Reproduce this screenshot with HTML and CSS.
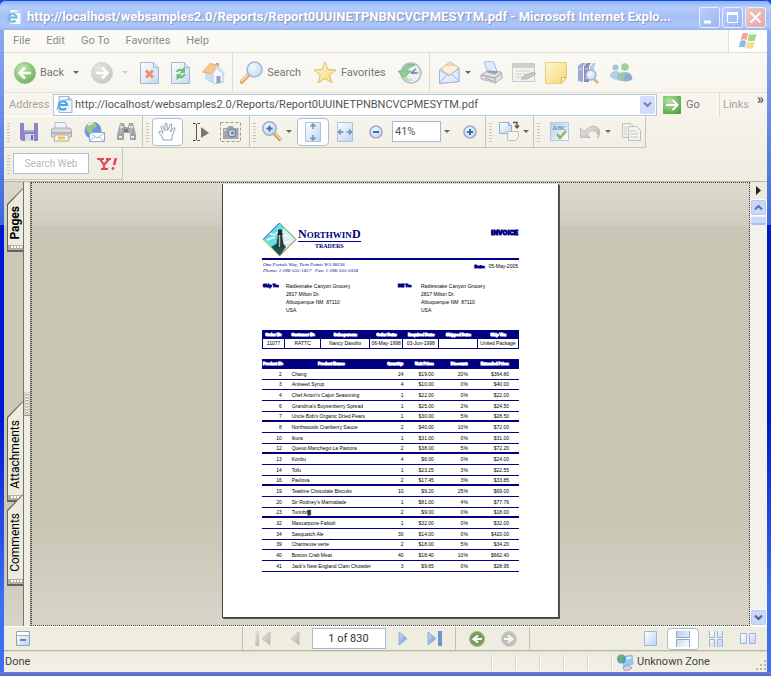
FILE: index.html
```html
<!DOCTYPE html>
<html lang="en">
<head>
<meta charset="utf-8">
<title>Report0UUINETPNBNCVCPMESYTM.pdf - Microsoft Internet Explorer</title>
<link rel="stylesheet" href="styles.css">
</head>
<body>
<svg class="defs" width="0" height="0" aria-hidden="true">
  <defs>
    <radialGradient id="green" cx=".35" cy=".3" r=".8"><stop offset="0" stop-color="#b9e3a4"/><stop offset=".6" stop-color="#77bf66"/><stop offset="1" stop-color="#55a04a"/></radialGradient>
    <radialGradient id="grey" cx=".35" cy=".3" r=".8"><stop offset="0" stop-color="#e4e4e0"/><stop offset="1" stop-color="#bdbdb8"/></radialGradient>
    <linearGradient id="paper" x1="0" y1="0" x2="1" y2="1"><stop offset="0" stop-color="#ffffff"/><stop offset="1" stop-color="#bfd4f1"/></linearGradient>
    <linearGradient id="paperdown" x1="1" y1="1" x2="0" y2="0"><stop offset="0" stop-color="#ffffff"/><stop offset="1" stop-color="#b3cbe8"/></linearGradient>
    <radialGradient id="lens" cx=".4" cy=".35" r=".7"><stop offset="0" stop-color="#f4fbff"/><stop offset="1" stop-color="#b4d6f2"/></radialGradient>
    <linearGradient id="gold" x1="0" y1="0" x2="1" y2="1"><stop offset="0" stop-color="#fffbd0"/><stop offset="1" stop-color="#f5cf60"/></linearGradient>
    <linearGradient id="blue" x1="0" y1="0" x2="1" y2="1"><stop offset="0" stop-color="#cfe4fa"/><stop offset="1" stop-color="#5f8fd0"/></linearGradient>
    <linearGradient id="silver" x1="0" y1="0" x2="1" y2="1"><stop offset="0" stop-color="#ececea"/><stop offset="1" stop-color="#b2b2b2"/></linearGradient>
  </defs>
</svg>

<div class="window">
  <header class="titlebar">
    <svg width="16" height="16" viewBox="0 0 16 16"><path d="M4 .5h8l3 3v12H4z" fill="#f4f8ff" stroke="#b4c8e4"/><path d="M12 .5v3h3" fill="#d4e2f6" stroke="#b4c8e4"/><path d="M2.500 8.500h8a4 4 0 1 0-1 3" fill="none" stroke="#6fb6dc" stroke-width="2"/><path d="M1 12C2 7 7 3 12 3" fill="none" stroke="#8cc8e4"/></svg>
    <h1>http://localhost/websamples2.0/Reports/Report0UUINETPNBNCVCPMESYTM.pdf - Microsoft Internet Explo...</h1>
    <div class="controls">
      <button class="wbtn" aria-label="Minimize"><svg width="19" height="19" viewBox="0 0 19 19"><path d="M4 14h7" stroke="#fff" stroke-width="3"/></svg></button>
      <button class="wbtn" aria-label="Maximize"><svg width="19" height="19" viewBox="0 0 19 19"><path d="M4.500 5v9.500h10V5M4 5h11" fill="none" stroke="#fff" stroke-width="1"/><path d="M4 5.500h11" stroke="#fff" stroke-width="3"/></svg></button>
      <button class="wbtn close" aria-label="Close"><svg width="19" height="19" viewBox="0 0 19 19"><path d="M4.500 4.500l10 10m0-10l-10 10" stroke="#fff" stroke-width="2"/></svg></button>
    </div>
  </header>

  <div class="chrome">
    <nav class="menubar">
      <button>File</button><button>Edit</button><button>Go To</button><button>Favorites</button><button>Help</button>
      <span class="flag"><svg width="20" height="18" viewBox="0 0 20 18"><path d="M4.500 1.500Q7 0 10 1.500L8.500 8Q6 6.500 2.500 8z" fill="#f2a48c"/><path d="M11 2Q14 3.500 18.500 2L17 8.500Q13 10 9.500 8.500z" fill="#a8d490"/><path d="M2.300 9Q5 7.500 8.200 9L6.800 15.500Q3.500 14 .8 15.500z" fill="#92b6ee"/><path d="M9.200 9.500Q12 11 16.700 9.500L15.200 16Q11.500 17.500 7.800 16z" fill="#fbe08c"/></svg></span>
    </nav>

    <div class="toolbar">
      <div class="group">
        <button><svg width="22" height="22" viewBox="0 0 22 22"><circle cx="11" cy="11" r="10.500" fill="url(#green)" stroke="#7dba70"/><path d="M17 11H6m5-5.500L5.500 11l5.500 5.500" fill="none" stroke="#fff" stroke-width="2.600"/></svg><span class="lbl">Back</span><i class="caret late"></i></button>
        <button aria-label="Forward"><svg width="22" height="22" viewBox="0 0 22 22"><circle cx="11" cy="11" r="10.500" fill="url(#grey)" stroke="#cfcfcb"/><path d="M5 11h11m-5-5.500l5.500 5.500-5.500 5.500" fill="none" stroke="#fff" stroke-width="2.600"/></svg><i class="caret late off"></i></button>
        <button aria-label="Stop"><svg width="19" height="22" viewBox="0 0 19 22"><path d="M.5.500h13l5 5v16H.5z" fill="url(#paper)" stroke="#9aacd4"/><path d="M13.500.500v5h5" fill="#dce8f8" stroke="#9aacd4"/><path d="M6 8.500l7 7m0-7l-7 7" stroke="#ef7c60" stroke-width="3"/></svg></button>
        <button aria-label="Refresh"><svg width="19" height="22" viewBox="0 0 19 22"><path d="M.5.500h13l5 5v16H.5z" fill="url(#paper)" stroke="#9aacd4"/><path d="M13.500.500v5h5" fill="#dce8f8" stroke="#9aacd4"/><path d="M5 10q1-4 6-3l3-2v6H8.500l2-2q-3-.500-3.500 1zM14.500 12q-1 5-6 4l-3 2v-6H11l-2 2q3 .500 3.500-2z" fill="#5cb463"/></svg></button>
        <button aria-label="Home"><svg width="23" height="23" viewBox="0 0 23 23"><path d="M14 2h3v6h-3z" fill="#e08468"/><path d="M4 11L14 6l7 7v8l-8 2-9-5z" fill="#f4f7fd" stroke="#a9b9d8"/><path d="M4 11v7l8 4.500V14z" fill="#c9d9f4"/><path d="M.5 11L8 2.500 15.500 4 10 13z" fill="#f7c27e" stroke="#e3a05e"/><path d="M15 4l7.500 8.500-1.500.500-6-6.500-5 6.500z" fill="#e7eefb" stroke="#a9b9d8" stroke-width=".7"/><path d="M14.500 15h4v6.500l-4 1z" fill="#7794c8"/></svg></button>
      </div>
      <div class="group">
        <button><svg width="23" height="23" viewBox="0 0 23 23"><path d="M1.500 21L9 13.500" stroke="#d8a25c" stroke-width="4" stroke-linecap="round"/><path d="M1.500 20L8.500 13" stroke="#f8d9a0" stroke-width="1.500" stroke-linecap="round"/><circle cx="14.500" cy="8.500" r="7.500" fill="url(#lens)" stroke="#9cadd8" stroke-width="1.600"/></svg><span class="lbl">Search</span></button>
        <button><svg width="24" height="23" viewBox="0 0 24 23"><path d="M12 1l3 7.500 8 .500-6.300 5 2.300 8L12 17.500 5 22l2.300-8L1 9l8-.500z" fill="url(#gold)" stroke="#dfb352" stroke-linejoin="round"/></svg><span class="lbl">Favorites</span></button>
        <button aria-label="History"><svg width="24" height="22" viewBox="0 0 24 22"><circle cx="13" cy="11" r="10" fill="#e6f1f4" stroke="#a4b6bc" stroke-width="1.500"/><path d="M13 11l5-4M13 11h6" stroke="#54677c" stroke-width="1.300"/><path d="M13 3v2M21 11h-2M13 19v-2" stroke="#7694b0"/><path d="M17 3Q7 0 4.500 9H0l6 7 7-7H9q1-4 8-6z" fill="#82c48a" stroke="#5ba564" stroke-width=".8"/><path d="M5 15q2 5 7 6l-2-6z" fill="#b0dca8"/></svg></button>
      </div>
      <div class="group tight">
        <button aria-label="Mail"><svg width="21" height="23" viewBox="0 0 21 23"><path d="M.5 9L11 .800 20 7v13.500L.5 22.500z" fill="#d8e8fb" stroke="#9cb0dc"/><path d="M3 9q0-5 8-5t8 3.500l-8 7z" fill="#fdeed0" stroke="#f0bd70"/><path d="M.5 9L10 14.500 20 7.500v13L.5 22.500zM.5 22l8-9M20 20l-8-7" fill="#dcecfd" stroke="#92abd9"/></svg><i class="caret"></i></button>
        <button aria-label="Print"><svg width="23" height="23" viewBox="0 0 23 23"><path d="M4 1l9-1 4 10-9 2z" fill="#dce8fc" stroke="#9cb0dc"/><path d="M1 14l6-4 14 1 1.500 6-7 5L1 18z" fill="#dcdde0" stroke="#a4a7ae"/><path d="M1 14l14 3 7-5M15 17v5M5 17l8 3" fill="none" stroke="#8e9299"/><path d="M6 11l3-1.500 10 1-4 3z" fill="#8c92a0"/></svg></button>
        <button aria-label="Edit"><svg width="24" height="20" viewBox="0 0 24 20"><path d="M.5.500h22v18H.5z" fill="#f3f2ee" stroke="#c4c4c0"/><path d="M1 3h21" stroke="#c9c9c6" stroke-width="4"/><path d="M4 8h14M4 11h10M4 14h8" stroke="#cfcfcb"/><path d="M9 16l4-4 9-3 2 2-9 5z" fill="#c0c0bc" stroke="#aaa"/></svg></button>
        <button aria-label="Note"><svg width="23" height="22" viewBox="0 0 23 22"><path d="M.5.500h21v15l-5 6H.5z" fill="url(#gold)" stroke="#e5c76c"/><path d="M21.500 15.500h-5v6z" fill="#fff6c4" stroke="#d8b048"/></svg></button>
        <button aria-label="Research"><svg width="23" height="22" viewBox="0 0 23 22"><path d="M1 4l4-3h4L6 4v16l-5-1z" fill="#8b9cda"/><path d="M7 4l3-3h4l-2 3v16H7z" fill="#8079b8"/><path d="M13 5l3-4h3l-2 4v6h-4z" fill="#a9c8dc"/><path d="M2 7h3M8 7h3M8 16h3" stroke="#e9e2b8"/><path d="M17 17l4 4" stroke="#d9a766" stroke-width="2.500"/><circle cx="14" cy="13" r="5" fill="url(#lens)" stroke="#8fa8d4" stroke-width="1.300"/></svg></button>
        <button aria-label="Messenger"><svg width="24" height="20" viewBox="0 0 24 20"><circle cx="6.500" cy="4.500" r="3" fill="#9cb9e0"/><path d="M1 14q-.500-6 5.500-6 5 0 5 4l-5 5z" fill="#a9c5ea"/><circle cx="16" cy="4" r="3.800" fill="#91c98e"/><path d="M8 17q-1-8 8-8 7 0 7.500 7Q20 20 8 17z" fill="#8ebfa6"/><path d="M17 10q6 1 6 6-4 3-9 2z" fill="#7b9cd0"/></svg></button>
      </div>
    </div>

    <form class="address">
      <label for="url">Address</label>
      <div class="field">
        <svg width="17" height="17" viewBox="0 0 16 16"><path d="M3 .5h9l3 3v12H3z" fill="#f0f6ff" stroke="#9cb4dc"/><path d="M12 .5v3h3" fill="#d4e2f6" stroke="#9cb4dc"/><path d="M2.500 8.500h8a4 4 0 1 0-1 3" fill="none" stroke="#4aa3dc" stroke-width="2"/><path d="M1 13C2 7 7 3 13 3" fill="none" stroke="#6fb6e4"/></svg>
        <input id="url" type="text" value="http://localhost/websamples2.0/Reports/Report0UUINETPNBNCVCPMESYTM.pdf">
        <button type="button" class="drop" aria-label="Show addresses"><svg width="9" height="7" viewBox="0 0 9 7"><path d="M1 1.500l3.500 3.500L8 1.500" fill="none" stroke="#7285ae" stroke-width="2"/></svg></button>
      </div>
      <button type="button" class="go"><svg width="18" height="18" viewBox="0 0 18 18"><rect width="18" height="18" rx="1" fill="url(#green)"/><path d="M3 9h11M9.500 4l5 5-5 5" fill="none" stroke="#fff" stroke-width="2"/></svg>Go</button>
      <button type="button" class="links">Links<b>»</b></button>
    </form>

    <div class="acrobat">
      <div class="strip files">
        <button aria-label="Save"><svg width="18" height="18" viewBox="0 0 18 18"><path d="M0 0h18v18H2l-2-2z" fill="#8c84c6"/><path d="M4 0h10v9H4z" fill="#e9f0e4"/><path d="M5 11h9v7H5z" fill="#d5d9ee"/><path d="M11 12h2v5h-2z" fill="#7269b4"/><path d="M4 8h10" stroke="#7269b4"/></svg></button>
        <button aria-label="Print file"><svg width="21" height="20" viewBox="0 0 21 20"><path d="M4 .5h10l3 8H4z" fill="#f0f5fd" stroke="#b0bccc"/><path d="M.5 8q0-2 3-2h14q3 0 3 3v6H.5z" fill="#d8d9da" stroke="#a8abae"/><path d="M1 11h19" stroke="#8e9194"/><path d="M4 13h13l1 6H3z" fill="#f8f4e4" stroke="#b4b0a0"/><path d="M7 16h7" stroke="#ecc95c" stroke-width="3"/></svg></button>
        <button aria-label="Email"><svg width="21" height="20" viewBox="0 0 21 20"><circle cx="9" cy="8.500" r="8.500" fill="#6d97d8"/><path d="M2 4Q6-1 11 .5l2 4-4 2-1 5q-4 1-6-5z" fill="#96c587"/><path d="M4 3q3-2 5-2" stroke="#e4f3fc" stroke-width="2" fill="none"/><path d="M5.500 10.500h15v9h-15z" fill="#fff" stroke="#8fa8cc"/><path d="M5.500 10.500L13 16l7.500-5.500M5.500 19l5-4M20 19l-5-4" fill="none" stroke="#9bb2d4"/></svg></button>
        <button aria-label="Find"><svg width="19" height="19" viewBox="0 0 19 19"><path d="M2 5l1-4h4l1 4h3l1-4h4l1 4 2 8v5h-6v-7H7v7H0v-5z" fill="#a0a4a8"/><path d="M3 5h3M12 5h4M2 15h3M14 15h3" stroke="#e5e7e8" stroke-width="2"/><path d="M4 2v9M14 2v9" stroke="#c9cccf"/><path d="M7 7h4v3H7z" fill="#777b80"/></svg></button>
      </div>
      <div class="strip basic">
        <button class="tool on" aria-label="Hand"><svg width="18" height="19" viewBox="0 0 18 19"><path d="M5 18Q5 15 1.500 11.500 0 9 2 9l3 2.500L3 4.500q1-2 2 0L7 9V2q1-2 2 0l.500 7L12 2.500q1-1.500 2 0L12.500 10 15.500 6q2-1 1.500 1l-3 7v4z" fill="#fff" stroke="#96a2b2"/></svg></button>
        <button class="tool" aria-label="Select text"><svg width="18" height="18" viewBox="0 0 18 18"><path d="M1 .5h2.500l1 1 1-1H8M1 17.500h2.500l1-1 1 1H8M4.500 1v16" fill="none" stroke="#555"/><path d="M9 4l8 6-8 5z" fill="#777"/></svg></button>
        <button class="tool" aria-label="Snapshot"><svg width="21" height="20" viewBox="0 0 21 20"><path d="M.5.500h20v19H.5z" fill="none" stroke="#999" stroke-dasharray="3 2"/><path d="M3 6h4l1.500-2h4L14 6h4.500v11H3z" fill="#a2a7ae"/><circle cx="12" cy="11" r="4" fill="#c5d5e8" stroke="#6b737e"/><circle cx="12.500" cy="11" r="1.800" fill="#6f8aae"/><path d="M4 8h2" stroke="#fff"/></svg></button>
      </div>
      <div class="strip zoom">
        <button aria-label="Zoom in tool"><svg width="21" height="21" viewBox="0 0 21 21"><path d="M12 12l7 7.500" stroke="#c69b54" stroke-width="3.500"/><path d="M12.500 12l7 7" stroke="#f8e29c" stroke-width="1.300"/><circle cx="7.500" cy="7.500" r="6.700" fill="url(#lens)" stroke="#a5a9c8" stroke-width="1.500"/><path d="M4.500 7.500h6m-3-3v6" stroke="#496bae" stroke-width="2"/></svg><i class="caret"></i></button>
        <button class="tool on" aria-label="Fit page"><svg width="16" height="20" viewBox="0 0 16 20"><path d="M.5.500h15v19H.5z" fill="url(#paper)" stroke="#a9c3e2"/><path d="M8 2v5M8 18v-5M5.500 4.500L8 2l2.500 2.500M5.500 15.500L8 18l2.500-2.500" fill="none" stroke="#6990bd" stroke-width="1.400"/></svg></button>
        <button class="wide" aria-label="Fit width"><svg width="16" height="20" viewBox="0 0 16 20"><path d="M.5.500h15v19H.5z" fill="url(#paper)" stroke="#a9c3e2"/><path d="M1.500 10h5M14.500 10h-5M4 7.500L1.500 10 4 12.500M12 7.500l2.500 2.500-2.500 2.500" fill="none" stroke="#6990bd" stroke-width="1.400"/></svg></button>
        <button class="minus" aria-label="Zoom out"><svg width="14" height="14" viewBox="0 0 14 14"><circle cx="7" cy="7" r="6" fill="url(#lens)" stroke="#a5a9c8" stroke-width="1.600"/><path d="M4 7h6" stroke="#496bae" stroke-width="2"/></svg></button>
        <div class="percent"><input type="text" aria-label="Zoom level" value="41%"><i class="caret"></i></div>
        <button aria-label="Zoom in"><svg width="14" height="14" viewBox="0 0 14 14"><circle cx="7" cy="7" r="6" fill="url(#lens)" stroke="#a5a9c8" stroke-width="1.600"/><path d="M4 7h6M7 4v6" stroke="#496bae" stroke-width="2"/></svg></button>
      </div>
      <div class="strip rotate">
        <button aria-label="Rotate"><svg width="21" height="21" viewBox="0 0 21 21"><path d="M.5 1.500h9l3 3v8H.5z" fill="url(#paper)" stroke="#8fb0dc"/><path d="M9.500 1.500v3h3" fill="none" stroke="#8fb0dc"/><path d="M8.500 10.500h11v6l-3 3h-8z" fill="#f4f4f2" stroke="#c0c0bc"/><path d="M14 1.500h4v5m-2-2l2 2.500 2-2.500" fill="none" stroke="#555" stroke-width="1.400"/></svg><i class="caret"></i></button>
      </div>
      <div class="strip edit">
        <button aria-label="Spell check"><svg width="19" height="19" viewBox="0 0 19 19"><path d="M.5.500h18v18H.5z" fill="url(#paperdown)" stroke="#b4cbe6"/><text x="9.500" y="8" text-anchor="middle" class="abc">ABC</text><path d="M7 12l3 4 6-7" fill="none" stroke="#8cb86a" stroke-width="2.500"/></svg></button>
        <button aria-label="Undo"><svg width="21" height="15" viewBox="0 0 21 15"><path d="M.5 4v9.500H10L7 10q5-6 9.500-1.500Q19 11 18 14q3-5 1-9-5-7-15 2.500z" fill="url(#silver)" stroke="#bdbdb9"/></svg><i class="caret"></i></button>
        <button aria-label="Copy"><svg width="19" height="18" viewBox="0 0 19 18"><path d="M.5.500h8l3 3v11H.5z" fill="#efefec" stroke="#c4c4c0"/><path d="M6.500 3.500h8l4 4v10h-12z" fill="#f3f3f0" stroke="#bebeba"/><path d="M2 5h3M2 8h3M2 11h3M8 8h6M8 11h8M8 14h8" stroke="#c4c4c0"/></svg></button>
      </div>
    </div>

    <div class="yahoo">
      <div class="strip web">
        <input type="text" aria-label="Search Web" placeholder="Search Web">
        <button class="y" aria-label="Yahoo"><svg width="21" height="12" viewBox="0 0 21 12"><path d="M0 1h7M9 1h5M3 1l4 6 5-6M7 6v4M4 11h7" fill="none" stroke="#e0485a" stroke-width="2.200"/><path d="M19 0l-2 7" stroke="#e0485a" stroke-width="2.600"/><circle cx="16" cy="10.500" r="1.400" fill="#e0485a"/></svg></button>
      </div>
    </div>

    <main class="viewer">
      <aside class="tabs">
        <button class="tab bold"><span>Pages</span></button>
        <button class="tab second"><span>Attachments</span></button>
        <button class="tab third"><span>Comments</span></button>
      </aside>
      <div class="splitter"><i></i></div>
      <section class="canvas">
        <article class="page">
          <header class="letterhead">
            <svg width="35" height="35" viewBox="0 0 35 35"><path d="M17.500 1L34 17.500 17.500 34 1 17.500z" fill="#62dfe2"/><path d="M22 5l12 12.500L21 31l-4-9z" fill="#d7eef0"/><path d="M7 11l5 2 4-3 3 4M5 18l8-3M22 13l6 3M20 22l8-3" stroke="#f6ffff" stroke-width="1.500" fill="none"/><path d="M9 25l5-3 7-1 3 4-6.500 9z" fill="#0c5a58"/><path d="M16 12h4l2 14h-8z" fill="#353a40"/><path d="M16.500 8h3v4h-3zM15 12h6" fill="#333" stroke="#222"/><path d="M17.500 13v12" stroke="#b4c0c0" stroke-width="1.300"/><path d="M1 17.500L17.500 1" stroke="#3434dc"/><path d="M17.500 1L34 17.500" stroke="#3aa848"/><path d="M34 17.500L17.500 34" stroke="#e04838"/><path d="M17.500 34L1 17.500" stroke="#d8c830"/></svg>
            <div class="brand"><strong><b>N</b>ORTHWIN<b>D</b></strong><span>TRADERS</span></div>
            <h2>INVOICE</h2>
          </header>
          <div class="contact">
            <address>One Portals Way, Twin Points WA 98156<br>Phone: 1-206-555-1417 &nbsp; Fax: 1-206-555-5938</address>
            <p><b class="tag">Date:</b>05-May-2005</p>
          </div>
          <div class="parties">
            <div><b class="tag">Ship To:</b><p>Rattlesnake Canyon Grocery<br>2817 Milton Dr.<br>Albuquerque NM&nbsp; 87110<br>USA</p></div>
            <div><b class="tag">Bill To:</b><p>Rattlesnake Canyon Grocery<br>2817 Milton Dr.<br>Albuquerque NM&nbsp; 87110<br>USA</p></div>
          </div>
          <table class="order">
            <colgroup><col class="o1"><col class="o2"><col class="o3"><col class="o4"><col class="o5"><col class="o6"><col></colgroup>
            <thead><tr><th>Order ID:</th><th>Customer ID:</th><th>Salesperson:</th><th>Order Date:</th><th>Required Date:</th><th>Shipped Date:</th><th>Ship Via:</th></tr></thead>
            <tbody><tr><td>11077</td><td>RATTC</td><td>Nancy Davolio</td><td>06-May-1998</td><td>03-Jun-1998</td><td></td><td>United Package</td></tr></tbody>
          </table>
          <table class="lines">
            <colgroup><col class="c1"><col class="c2"><col class="c3"><col class="c4"><col class="c5"><col></colgroup>
            <thead><tr><th>Product ID:</th><th>Product Name:</th><th>Quantity:</th><th>Unit Price:</th><th>Discount:</th><th>Extended Price:</th></tr></thead>
            <tbody>
              <tr><td>2</td><td>Chang</td><td>24</td><td>$19.00</td><td>20%</td><td>$364.80</td></tr>
              <tr><td>3</td><td>Aniseed Syrup</td><td>4</td><td>$10.00</td><td>0%</td><td>$40.00</td></tr>
              <tr><td>4</td><td>Chef Anton's Cajun Seasoning</td><td>1</td><td>$22.00</td><td>0%</td><td>$22.00</td></tr>
              <tr><td>6</td><td>Grandma's Boysenberry Spread</td><td>1</td><td>$25.00</td><td>2%</td><td>$24.50</td></tr>
              <tr class="rule"><td>7</td><td>Uncle Bob's Organic Dried Pears</td><td>1</td><td>$30.00</td><td>5%</td><td>$28.50</td></tr>
              <tr><td>8</td><td>Northwoods Cranberry Sauce</td><td>2</td><td>$40.00</td><td>10%</td><td>$72.00</td></tr>
              <tr><td>10</td><td>Ikura</td><td>1</td><td>$31.00</td><td>0%</td><td>$31.00</td></tr>
              <tr class="rule"><td>12</td><td>Queso Manchego La Pastora</td><td>2</td><td>$38.00</td><td>5%</td><td>$72.20</td></tr>
              <tr><td>13</td><td>Konbu</td><td>4</td><td>$6.00</td><td>0%</td><td>$24.00</td></tr>
              <tr><td>14</td><td>Tofu</td><td>1</td><td>$23.25</td><td>3%</td><td>$22.55</td></tr>
              <tr class="rule"><td>16</td><td>Pavlova</td><td>2</td><td>$17.45</td><td>3%</td><td>$33.85</td></tr>
              <tr><td>19</td><td>Teatime Chocolate Biscuits</td><td>10</td><td>$9.20</td><td>25%</td><td>$69.00</td></tr>
              <tr><td>20</td><td>Sir Rodney's Marmalade</td><td>1</td><td>$81.00</td><td>4%</td><td>$77.76</td></tr>
              <tr class="rule"><td>23</td><td>Tunnbr▓</td><td>2</td><td>$9.00</td><td>0%</td><td>$18.00</td></tr>
              <tr><td>32</td><td>Mascarpone Fabioli</td><td>1</td><td>$32.00</td><td>0%</td><td>$32.00</td></tr>
              <tr><td>34</td><td>Sasquatch Ale</td><td>30</td><td>$14.00</td><td>0%</td><td>$420.00</td></tr>
              <tr><td>39</td><td>Chartreuse verte</td><td>2</td><td>$18.00</td><td>5%</td><td>$34.20</td></tr>
              <tr><td>40</td><td>Boston Crab Meat</td><td>40</td><td>$18.40</td><td>10%</td><td>$662.40</td></tr>
              <tr><td>41</td><td>Jack's New England Clam Chowder</td><td>3</td><td>$9.65</td><td>0%</td><td>$28.95</td></tr>
            </tbody>
          </table>
        </article>
      </section>
      <div class="scroll">
        <button class="flyout" aria-label="Open menu"><svg width="5" height="9" viewBox="0 0 5 9"><path d="M0 0l5 4.500L0 9z" fill="#222"/></svg></button>
        <button class="sb" aria-label="Scroll up"><svg width="9" height="7" viewBox="0 0 9 7"><path d="M1 5.500L4.500 2 8 5.500" fill="none" stroke="#5b74ac" stroke-width="2"/></svg></button>
        <i class="thumb"></i>
        <button class="sb end" aria-label="Scroll down"><svg width="9" height="7" viewBox="0 0 9 7"><path d="M1 1.500L4.500 5 8 1.500" fill="none" stroke="#4d6185" stroke-width="2"/></svg></button>
      </div>
    </main>

    <footer class="pager">
      <button class="hide" aria-label="Hide toolbars"><svg width="14" height="15" viewBox="0 0 14 15"><path d="M.5.500h13v14H.5z" fill="url(#paper)" stroke="#98a4b8"/><path d="M1 2.500h12" stroke="#fff" stroke-width="3"/><path d="M1 4.500h12" stroke="#a4acbc"/><path d="M4 9h6" stroke="#6d87bd" stroke-width="2"/></svg></button>
      <div class="nav">
        <button aria-label="First page"><svg width="16" height="15" viewBox="0 0 16 15"><path d="M0 0h4v15H0z" fill="url(#silver)"/><path d="M15 1v13L7 7.500z" fill="url(#silver)" stroke="#c4c4c0"/></svg></button>
        <button aria-label="Previous page"><svg width="10" height="15" viewBox="0 0 10 15"><path d="M9 1v13L1 7.500z" fill="url(#silver)" stroke="#c4c4c0"/></svg></button>
        <input type="text" aria-label="Page" value="1 of 830">
        <button aria-label="Next page"><svg width="10" height="15" viewBox="0 0 10 15"><path d="M1 1v13l8-6.500z" fill="url(#blue)" stroke="#8fb0d8"/></svg></button>
        <button class="last" aria-label="Last page"><svg width="16" height="15" viewBox="0 0 16 15"><path d="M1 1v13l8-6.500z" fill="url(#blue)" stroke="#8fb0d8"/><path d="M11 0h4v15h-4z" fill="#6f94cc"/></svg></button>
        <div class="views">
          <button aria-label="Previous view"><svg width="16" height="16" viewBox="0 0 16 16"><circle cx="8" cy="8" r="7.500" fill="#7a9c5c" stroke="#a4b894"/><path d="M13 8H5m4-3.500L4.500 8 9 11.500" fill="none" stroke="#fff" stroke-width="2.200"/></svg></button>
          <button aria-label="Next view"><svg width="16" height="16" viewBox="0 0 16 16"><circle cx="8" cy="8" r="7.500" fill="#bebeba" stroke="#cfcfcb"/><path d="M3 8h8M7 4.500L11.500 8 7 11.500" fill="none" stroke="#f6f6f4" stroke-width="2.200"/></svg></button>
        </div>
      </div>
      <div class="layouts">
        <button aria-label="Single page"><svg width="13" height="15" viewBox="0 0 13 15"><path d="M.5.500h12v14H.5z" fill="url(#paper)" stroke="#9db7dc"/></svg></button>
        <button class="tool on" aria-label="Continuous"><svg width="14" height="16" viewBox="0 0 14 16"><path d="M.5 0v6.500h13V0M.5 16V8.500h13V16" fill="url(#paperdown)" stroke="#8ca8cc"/></svg></button>
        <button aria-label="Continuous facing"><svg width="14" height="16" viewBox="0 0 14 16"><path d="M.5 0v6.500h5V0M8.500 0v6.500h5V0M.5 16V8.500h5V16M8.500 16V8.500h5V16" fill="url(#paper)" stroke="#9db7dc"/></svg></button>
        <button aria-label="Facing"><svg width="16" height="11" viewBox="0 0 16 11"><path d="M.5.500h6v10h-6zM9.500.500h6v10h-6z" fill="url(#paper)" stroke="#9db7dc"/></svg></button>
      </div>
    </footer>

    <footer class="status">
      <span class="done">Done</span>
      <i class="cell"></i><i class="cell"></i><i class="cell"></i><i class="cell"></i><i class="cell"></i>
      <span class="zone"><svg width="17" height="17" viewBox="0 0 17 17"><path d="M5 3l10-2 1 9-9 2z" fill="#8cd2f4" stroke="#a8b0c4"/><path d="M7 5l7-1.500" stroke="#d8f4fe" stroke-width="2"/><circle cx="4.500" cy="5" r="4.500" fill="#5e8edc"/><path d="M1 3q3-4 6-1L5 5l1 3-3 1z" fill="#6ab85c"/><path d="M6 13l6-2 3 3-5 3q-4 0-4-4z" fill="#d4d4e4" stroke="#9c9cb8"/></svg>Unknown Zone</span>
      <svg class="grip" width="12" height="12" viewBox="0 0 12 12"><path d="M9 1h2M9 5h2M9 9h2M5 5h2M5 9h2M1 9h2" stroke="#bdb9a8" stroke-width="2"/></svg>
    </footer>
  </div>
</div>
</body>
</html>
```

FILE: styles.css
```css
* { box-sizing: border-box; }

body {
  margin: 0;
  font: 11px/14px Roboto, "Noto Sans", sans-serif;
  color: #333;
  background: #0a50e0;
}

button {
  display: flex;
  align-items: center;
  margin: 0;
  padding: 0;
  border: 0;
  background: none;
  color: inherit;
  font: inherit;
}

input {
  min-width: 0;
  margin: 0;
  padding: 0;
  border: 0;
  background: #fff;
  color: #555;
  font: inherit;
}

svg { display: block; flex: none; }
.defs { position: absolute; }

.window {
  display: flex;
  flex-direction: column;
  min-height: 100vh;
  padding: 0 4px 4px;
  border-radius: 6px 6px 0 0;
  background:
    linear-gradient(#5b84ea, #5a62bc) bottom / 100% 4px no-repeat,
    linear-gradient(#9ab4f0 0, #3a68e0 225px, #0018d4 225px, #0018d4 420px, #3c70f0 600px);
}

/* Title bar */
.titlebar {
  display: flex;
  align-items: center;
  height: 30px;
  margin: 0 -4px;
  padding: 3px 5px 0 6px;
  border-top: 1px solid #0a50e4;
  border-radius: 6px 6px 0 0;
  background: linear-gradient(#8fb0f4, #b4cdfd 6px, #a6c0f6 16px, #abc6fb 25px, #9ab4ee);
}
.titlebar h1 {
  flex: 1;
  min-width: 0;
  margin: 0 0 0 5px;
  overflow: hidden;
  color: #fff;
  font: bold 13px/18px Roboto, "Noto Sans", sans-serif;
  text-shadow: 1px 1px 1px #8290b8;
  white-space: nowrap;
}
.controls { display: flex; gap: 2px; }
.wbtn {
  width: 21px;
  height: 21px;
  border: 1px solid #e8effe;
  border-radius: 3px;
  background: linear-gradient(135deg, #bccefb, #9cb4f3);
}
.wbtn.close { background: linear-gradient(135deg, #efc6c4, #e2aaa8); }

.chrome {
  display: flex;
  flex: 1;
  flex-direction: column;
  background: linear-gradient(#fbfaf7 0, #f6f4ec 80px, #efede0 150px, #efede0);
}

/* Menu */
.menubar {
  display: flex;
  align-items: stretch;
  height: 23px;
  gap: 16px;
  padding-left: 9px;
  border-bottom: 1px solid #e4e0d0;
  color: #8c8c8c;
}
.flag {
  display: flex;
  align-items: center;
  justify-content: center;
  width: 39px;
  margin-left: auto;
  border-left: 1px solid #e4e0d4;
  background: #fff;
}

/* Browser toolbar */
.toolbar {
  display: flex;
  height: 40px;
  padding-left: 3px;
  border-bottom: 1px solid #e6e2d4;
  color: #777;
}
.toolbar svg { opacity: .85; }
.group {
  display: flex;
  align-items: center;
  gap: 12px;
  padding: 0 7px;
  border-right: 1px solid #dedbcd;
}
.group.tight { gap: 9px; padding-left: 9px; border-right: 0; }
.lbl { margin-left: 4px; }
.caret {
  flex: none;
  margin-left: 5px;
  border: 3px solid transparent;
  border-top-color: #666;
  border-bottom: 0;
}
.caret.late { margin-left: 9px; }
.caret.off { border-top-color: #ccc; }

/* Address */
.address {
  display: flex;
  align-items: center;
  height: 23px;
  margin: 0;
  padding-left: 5px;
  color: #a5a59d;
}
.address label { width: 44px; }
.field {
  display: flex;
  flex: 1;
  align-items: center;
  height: 22px;
  padding: 1px 1px 1px 2px;
  border: 1px solid #b4c8dc;
  background: #fff;
}
.field input { flex: 1; margin-left: 2px; }
.drop {
  justify-content: center;
  width: 15px;
  height: 18px;
  border-radius: 2px;
  background: #d0ddfb;
}
.go {
  gap: 5px;
  width: 55px;
  margin-left: 6px;
  border-right: 1px solid #fff;
  color: #777;
}
.links {
  align-self: stretch;
  width: 48px;
  gap: 8px;
  margin-left: 1px;
  border-left: 1px solid #dedbcd;
  padding-left: 3px;
}
.links b { align-self: flex-start; color: #555; font-size: 14px; line-height: 12px; }

/* Acrobat strips */
.acrobat, .yahoo { display: flex; height: 32px; }
.strip {
  display: flex;
  align-items: center;
  padding: 0 8px 0 16px;
  border: 1px solid #c9c6b8;
  border-width: 0 1px 1px 0;
  box-shadow: inset 0 1px #fff;
  background: repeating-linear-gradient(transparent 0 1px, #c9c6b8 1px 2px, transparent 2px 3px) 3px 6px / 3px 20px no-repeat;
}
.files { gap: 12px; width: 139px; }
.files button:first-child { margin-right: 1px; }
.basic { gap: 8px; width: 107px; padding-left: 9px; }
.zoom { gap: 13px; width: 236px; padding-left: 12px; }
.zoom .on { margin: 0 -5px 0 -8px; }
.zoom .minus { margin-left: 3px; }
.zoom .percent { margin-left: -4px; }
.rotate { width: 48px; padding-left: 13px; }
.edit { gap: 11px; width: 112px; }
.zoom .caret, .rotate .caret { margin-left: 3px; }
.edit .caret { margin-left: 4px; }
.tool { justify-content: center; width: 22px; height: 28px; }
.tool.on {
  width: 32px;
  border: 1px solid #a9bfd4;
  border-radius: 4px;
  background: #fff;
}
.percent { display: flex; align-items: center; }
.percent input {
  width: 49px;
  height: 21px;
  padding-left: 2px;
  border: 1px solid #a4bbd6;
}
.abc { fill: #6f8fac; font: bold 7px "Liberation Serif", serif; }

.web { gap: 8px; width: 119px; padding-left: 9px; }
.web input {
  flex: none;
  width: 76px;
  height: 21px;
  border: 1px solid #a9bfd8;
  font-size: 10px;
  text-align: center;
}
.web input::placeholder { color: #bab9b0; opacity: 1; }
.web .y { flex: none; }

/* Document viewer */
.viewer {
  display: flex;
  flex: 1;
  min-height: 444px;
  margin-top: 1px;
  border-top: 1px solid #b8b4a4;
}
.tabs {
  display: flex;
  flex-direction: column;
  align-items: flex-end;
  width: 20px;
  padding: 6px 0 40px;
  border-right: 1px solid #77756a;
  background: linear-gradient(#dad7cc, #d2cfc2 43px, #cbc8b8 44px, #cbc8b8 360px, #d6d3c8);
}
.tab {
  position: relative;
  justify-content: center;
  width: 16px;
  height: 64px;
  padding-top: 5px;
  background: #66645a;
  clip-path: polygon(100% 0, 100% 100%, 0 100%, 0 16px);
  color: #000;
}
.tab::before {
  content: "";
  position: absolute;
  inset: 1px 0 2px 1px;
  background:
    repeating-linear-gradient(90deg, #fff 0 2px, transparent 2px 3px) 3px calc(100% - 2px) / 11px 2px no-repeat,
    linear-gradient(#b5b2a5, #b5b2a5) bottom / 100% 5px no-repeat,
    #edebdd;
  clip-path: polygon(100% 0, 100% 100%, 0 100%, 0 16px);
}
.tab span {
  position: relative;
  font-size: 12px;
  writing-mode: vertical-rl;
  transform: rotate(180deg);
}
.tab.bold { font-weight: bold; }
.tab.second { height: 101px; margin-top: auto; }
.tab.third { height: 92px; margin-top: -8px; }

.splitter {
  display: flex;
  align-items: center;
  width: 7px;
  border-right: 1px solid #8a887c;
  background: #f0eee2;
}
.splitter i {
  width: 6px;
  height: 24px;
  border-bottom: 1px solid #999688;
  background: repeating-linear-gradient(#fff 0 1px, #aaa799 1px 2px, transparent 2px 3px) center / 2px 21px no-repeat, #d5d2c4;
}
.canvas {
  flex: 1;
  padding: 1px 0 7px;
  border: 1px dotted #444;
  background: linear-gradient(#dddacf, #cfccbf 43px, #cac6b5 44px, #cac6b5 340px, #d8d4c9);
}
.scroll {
  display: flex;
  flex-direction: column;
  width: 17px;
  background: #f3f2ec;
}
.flyout { justify-content: center; height: 17px; background: #edeade; }
.sb {
  justify-content: center;
  height: 17px;
  border: 1px solid #fff;
  border-radius: 3px;
  outline: 1px solid #b9c8ec;
  outline-offset: -2px;
  background: #c9d7fb;
}
.thumb { height: 8px; margin: 1px; border-bottom: 2px solid #a9bdf0; border-radius: 2px; background: #ccd9fc; }
.sb.end { margin-top: auto; }

/* Printed page */
.page {
  width: 337px;
  min-height: 434px;
  margin: 0 auto;
  padding: 38px 39px 0;
  border: 1px solid #444;
  border-width: 0 1px 1px;
  box-shadow: 1px 1px #555;
  background: #fff;
  color: #000;
  font: 5px/8px "Liberation Sans", sans-serif;
}
.page p { margin: 0; }
.letterhead {
  display: flex;
  height: 38px;
  border-bottom: 2px solid #000080;
  color: #000080;
}
.brand {
  padding: 7px 0 0 1px;
  font-family: "Liberation Serif", serif;
  text-align: center;
}
.brand strong { display: block; border-bottom: 1px solid; font-size: 9px; line-height: 11px; }
.brand b { font-size: 12px; }
.brand span { display: block; font-size: 6px; font-weight: bold; line-height: 8px; }
.letterhead h2 {
  margin: 6px 1px 0 auto;
  font: bold 7px/10px Roboto, sans-serif;
  -webkit-text-stroke: 1px #000080;
}
.contact { display: flex; justify-content: space-between; padding: 2px 1px 0 1px; }
.contact address {
  color: #000080;
  font: italic 5px/6px "Liberation Serif", serif;
}
.tag {
  color: #000080;
  font-size: 4px;
  -webkit-text-stroke: 1px #000080;
}
.contact .tag { margin-right: 4px; }
.parties { display: flex; margin-top: 8px; padding-left: 1px; }
.parties > div { display: flex; width: 135px; flex: none; }
.parties > div + div { width: 120px; }
.parties .tag { width: 23px; }

table {
  width: 100%;
  border-collapse: separate;
  border-spacing: 0;
  table-layout: fixed;
  font-size: 5px;
}
th {
  height: 9px;
  padding: 0;
  background: #000080;
  color: #fff;
  font: bold 4px/8px Roboto, sans-serif;
  -webkit-text-stroke: 1px #fff;
  white-space: nowrap;
}
td { padding: 0; line-height: 7px; white-space: nowrap; }
.order { margin-top: 16px; text-align: center; }
.order td { height: 10px; border: 1px solid #000080; border-width: 0 1px 1px 0; }
.order td:first-child { border-left-width: 1px; }
.o1 { width: 9%; } .o2 { width: 14%; } .o3 { width: 19%; } .o4 { width: 13%; } .o5 { width: 14%; } .o6 { width: 15%; }
.lines { margin-top: 10px; text-align: right; }
.lines th { height: 10px; text-align: right; }
.lines td { height: 11px; border-bottom: 1px solid #000080; }
.lines tr:nth-child(3n+2) td { height: 10px; }
.lines .rule td { border-bottom-width: 2px; }
.c1 { width: 10%; } .c2 { width: 34%; } .c3 { width: 13%; } .c4 { width: 13%; } .c5 { width: 14%; }
.lines td:nth-child(1) { padding-right: 6px; }
.lines th:nth-child(1) { padding-left: 1px; text-align: left; }
.lines th:nth-child(2) { text-align: center; }
.lines td:nth-child(2) { padding-left: 4px; text-align: left; }
.lines tr > :nth-child(3) { padding-right: 5px; }
.lines tr > :nth-child(4) { padding-right: 8px; }
.lines tr > :nth-child(5),
.lines tr > :nth-child(6) { padding-right: 10px; }

/* Page navigation */
.pager {
  display: grid;
  grid-template-columns: 1fr auto 1fr;
  align-items: center;
  height: 25px;
  border-top: 1px solid #fff;
  border-bottom: 1px solid #b9b6a6;
}
.hide { justify-self: start; margin-left: 12px; }
.nav {
  display: flex;
  align-items: center;
  height: 100%;
  padding-left: 12px;
  gap: 12px;
  border: 1px solid #c4c1b2;
  border-width: 0 1px;
}
.nav button:first-child { margin-right: 7px; }
.views button:first-child { margin-right: 0; }
.nav input { width: 74px; height: 21px; border: 1px solid #a4bbd6; color: #333; text-align: center; }
.last { margin-left: 7px; }
.views {
  display: flex;
  align-items: center;
  align-self: stretch;
  gap: 16px;
  padding: 0 12px 0 13px;
  border-left: 1px solid #c4c1b2;
}
.layouts { display: flex; align-items: center; justify-self: end; gap: 10px; padding-right: 11px; }
.layouts button:last-child { margin-left: 7px; }
.layouts .tool { height: 22px; }

/* Status bar */
.status {
  display: flex;
  align-items: center;
  height: 21px;
  padding-left: 1px;
  border-top: 1px solid #dcd9ca;
  background: linear-gradient(#eeecdf, #f3f1e6);
  color: #444;
}
.done { flex: 1; }
.cell { width: 24px; height: 16px; border-left: 1px solid #fff; box-shadow: -1px 0 #d8d5c7; }
.zone { display: flex; align-items: center; gap: 3px; width: 143px; height: 16px; padding-left: 4px; border-left: 1px solid #fff; box-shadow: -1px 0 #d8d5c7; }
.grip { align-self: flex-end; }
```
